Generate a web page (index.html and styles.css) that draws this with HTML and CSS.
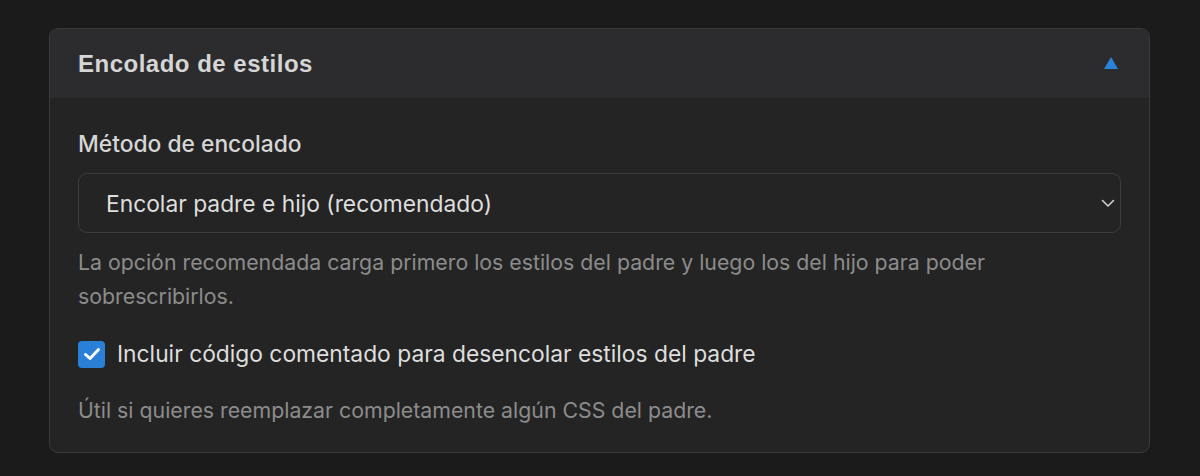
FILE: index.html
```html
<!DOCTYPE html>
<html lang="es">
<head>
<meta charset="utf-8">
<title>Encolado de estilos</title>
<link rel="stylesheet" href="styles.css">
</head>
<body>
<section class="panel">
  <header class="panel-head">
    <h2 class="panel-title">Encolado de estilos</h2>
    <svg class="toggle" width="16" height="14" viewBox="0 0 16 14"><polygon points="8,1 15,13 1,13" fill="#2a82da"/></svg>
  </header>
  <div class="panel-body">
    <label class="field-label">Método de encolado</label>
    <div class="select">
      <span class="select-value">Encolar padre e hijo (recomendado)</span>
      <svg class="chevron" width="14" height="9" viewBox="0 0 14 9"><polyline points="1.5,1.5 7,7 12.5,1.5" fill="none" stroke="#d0d0d0" stroke-width="1.6" stroke-linecap="round" stroke-linejoin="round"/></svg>
    </div>
    <p class="help">La opción recomendada carga primero los estilos del padre y luego los del hijo para poder sobrescribirlos.</p>
    <div class="check-row">
      <span class="checkbox"><svg width="18" height="14" viewBox="0 0 18 14"><polyline points="2.5,7.5 7,11.5 15.5,2.5" fill="none" stroke="#fff" stroke-width="3" stroke-linecap="round" stroke-linejoin="round"/></svg></span>
      <span class="check-label">Incluir código comentado para desencolar estilos del padre</span>
    </div>
    <p class="help help-last">Útil si quieres reemplazar completamente algún CSS del padre.</p>
  </div>
</section>
</body>
</html>
```
FILE: styles.css
```css
html, body {
  margin: 0;
  padding: 0;
  background: #1b1b1c;
}
body {
  padding: 28px 50px 0 49px;
  font-family: Inter, "Noto Sans", sans-serif;
}
.panel {
  border: 1px solid #3b3b3d;
  border-radius: 9px;
  background: #242424;
  overflow: hidden;
  height: 425px;
  box-sizing: border-box;
}
.panel-head {
  height: 69px;
  background: #2c2c2e;
  display: flex;
  align-items: center;
  justify-content: space-between;
  padding: 0 30px 0 28px;
}
.panel-title {
  margin: 0;
  font-family: "Liberation Sans", Arial, sans-serif;
  font-size: 24px;
  font-weight: 700;
  color: #d6d6d6;
  letter-spacing: 0.5px;
  line-height: 30px;
}
.toggle {
  margin-top: -2px;
}
.panel-body {
  padding: 31px 28px 0 28px;
}
.field-label {
  display: block;
  font-size: 22.8px;
  font-weight: 500;
  color: #d6d6d6;
  line-height: 30px;
}
.select {
  margin-top: 14px;
  height: 60px;
  box-sizing: border-box;
  border: 1px solid #3d3d3f;
  border-radius: 9px;
  display: flex;
  align-items: center;
  justify-content: space-between;
  padding: 0 5px 0 27px;
}
.select-value {
  font-size: 22.8px;
  color: #dedede;
}
.help {
  margin: 12px 0 0 0;
  font-size: 21.3px;
  line-height: 34px;
  color: #8c8c8c;
}
.check-row {
  margin-top: 26px;
  display: flex;
  align-items: center;
  gap: 12px;
}
.checkbox {
  width: 27px;
  height: 27px;
  border-radius: 4px;
  background: #2a7fd6;
  display: flex;
  align-items: center;
  justify-content: center;
  flex: none;
}
.check-label {
  font-size: 22.8px;
  color: #dedede;
  line-height: 30px;
}
.help-last {
  margin-top: 24px;
}
```
